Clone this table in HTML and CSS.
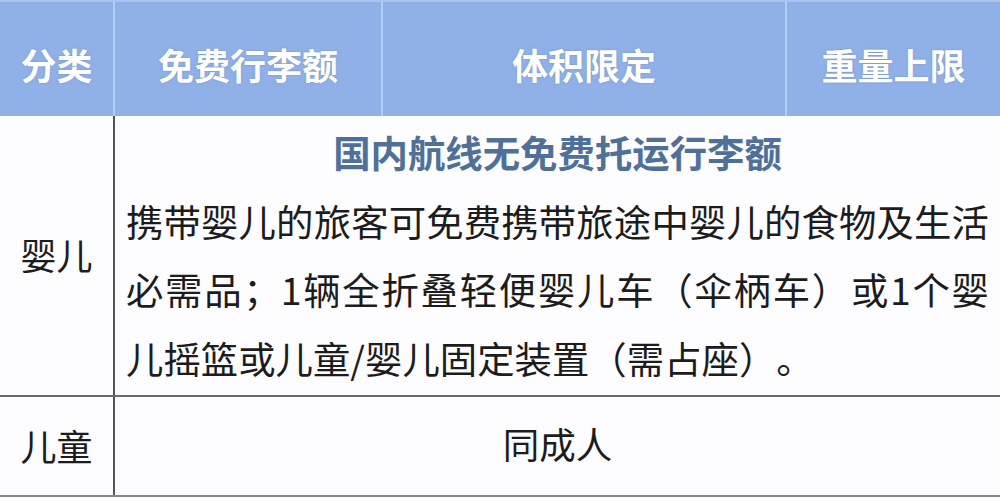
FILE: index.html
```html
<!DOCTYPE html>
<html lang="zh-CN">
<head>
<meta charset="utf-8">
<title>婴儿儿童行李额</title>
<link rel="stylesheet" href="styles.css">
</head>
<body>
<div class="sheet">
  <div class="head">
    <div class="hcell c1">分类</div>
    <div class="hcell c2">免费行李额</div>
    <div class="hcell c3">体积限定</div>
    <div class="hcell c4">重量上限</div>
  </div>
  <div class="row row-infant">
    <div class="cat">婴儿</div>
    <div class="detail">
      <div class="sub">国内航线无免费托运行李额</div>
      <p class="desc"><span class="ln just">携带婴儿的旅客可免费携带旅途中婴儿的食物及生活</span><span class="ln just">必需品；1辆全折叠轻便婴儿车（伞柄车）或1个婴</span><span class="ln">儿摇篮或儿童/婴儿固定装置（需占座）。</span></p>
    </div>
  </div>
  <div class="row row-child">
    <div class="cat">儿童</div>
    <div class="detail center">同成人</div>
  </div>
</div>
</body>
</html>
```
FILE: styles.css
```css
* { box-sizing: border-box; }
html, body {
  margin: 0;
  padding: 0;
  background: #fdfcff;
}
body {
  font-family: "Noto Sans CJK SC", "Noto Sans", sans-serif;
  color: #1c1c1c;
  text-spacing-trim: space-all;
}
.sheet {
  width: 1000px;
  height: 501px;
  overflow: hidden;
  background: #fdfcff;
}
.head {
  display: grid;
  grid-template-columns: 115px 268px 404px 1fr;
  height: 116px;
  background: #8fb1e8;
  border-top: 2px solid #a9c4f0;
}
.hcell {
  display: flex;
  align-items: center;
  justify-content: center;
  padding-top: 9px;
  color: #ffffff;
  font-weight: 700;
  font-size: 36px;
  text-shadow: 0 0 2px rgba(90, 110, 150, 0.5);
  border-right: 2px solid #b3cef5;
}
.hcell.c4 { border-right: none; }
.row {
  display: grid;
  grid-template-columns: 115px 1fr;
  border-bottom: 2px solid #6a6a6a;
}
.row-infant { height: 281px; }
.row-child { height: 100px; border-bottom-color: #858585; }
.cat {
  display: flex;
  align-items: center;
  justify-content: center;
  padding-bottom: 3px;
  font-size: 36px;
  color: #1c1c1c;
  border-right: 2px solid #555555;
}
.detail {
  padding: 2px 0 0 11px;
  font-size: 37.4px;
  line-height: 68.5px;
}
.sub {
  text-align: center;
  font-weight: 700;
  color: #4f7098;
  padding-right: 11px;
}
.desc {
  margin: 0;
}
.ln {
  display: block;
  white-space: nowrap;
}
.ln.just {
  width: 863px;
  text-align: justify;
  text-align-last: justify;
  white-space: normal;
}
.detail.center {
  display: flex;
  align-items: center;
  justify-content: center;
  padding: 0 0 3px 0;
  font-size: 36.5px;
}
```
